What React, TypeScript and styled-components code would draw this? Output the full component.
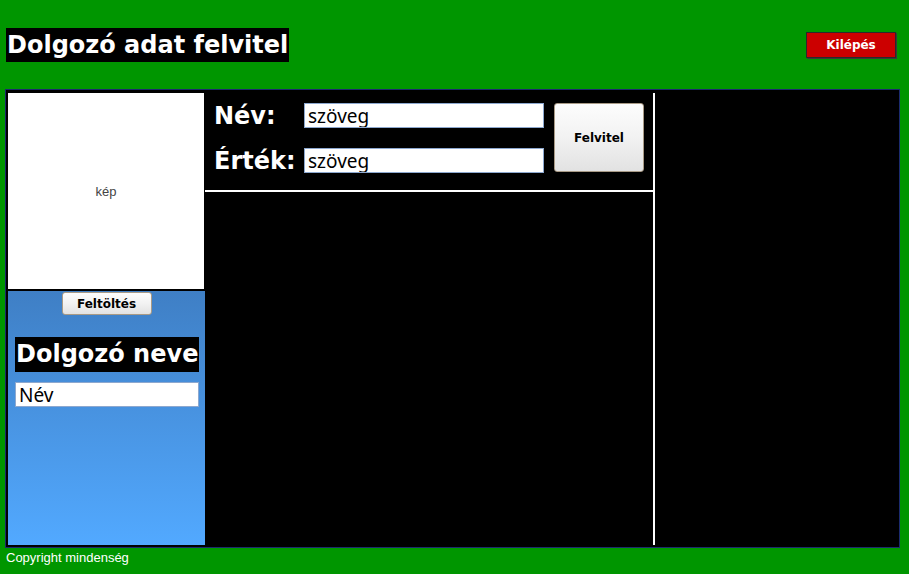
import React from "react";
import styled, { createGlobalStyle } from "styled-components";

const Global = createGlobalStyle`
  html, body { margin: 0; padding: 0; }
  body {
    background: #009600;
    font-family: "Liberation Sans", Arial, sans-serif;
    width: 909px;
    height: 574px;
    overflow: hidden;
  }
  * { box-sizing: border-box; }
`;

const Page = styled.div`
  display: flex;
  flex-direction: column;
  width: 909px;
  height: 574px;
`;

const Header = styled.header`
  height: 89px;
  display: flex;
  align-items: center;
  justify-content: space-between;
  padding: 0 13px 0 6px;
`;

const HeavyBox = styled.h1<{ $size?: number }>`
  margin: 0;
  display: inline-block;
  background: #000;
  color: #fff;
  font-family: "DejaVu Sans", Verdana, sans-serif;
  font-weight: bold;
  font-size: ${(p) => p.$size ?? 24}px;
  line-height: 34px;
  height: 34px;
  padding: 0 1px;
  white-space: nowrap;
`;

const ExitButton = styled.button`
  width: 90px;
  height: 26px;
  background: #cc0000;
  border: 1px solid #2a2a2a;
  box-shadow: 1px 1px 0 #3a3a3a;
  color: #fff;
  font-family: "DejaVu Sans", Verdana, sans-serif;
  font-weight: bold;
  font-size: 12px;
  padding: 0;
`;

const Main = styled.main`
  margin-left: 5px;
  width: 895px;
  height: 459px;
  border: 1px solid #1c2a6e;
  background: #000;
  padding: 3px 2px 2px 2px;
  display: grid;
  grid-template-columns: 197px 450px 1fr;
`;

const LeftCol = styled.div`
  display: flex;
  flex-direction: column;
  gap: 2px;
`;

const ImageBox = styled.div`
  width: 196px;
  height: 196px;
  background: #fff;
  color: #444;
  font-size: 13px;
  display: flex;
  align-items: center;
  justify-content: center;
`;

const BluePanel = styled.div`
  flex: 1;
  background: linear-gradient(to bottom, #3f7fc5, #52a9ff);
  display: flex;
  flex-direction: column;
  align-items: center;
  padding: 1px 0 0 0;
`;

const GreyButton = styled.button<{ $w: number; $h: number }>`
  width: ${(p) => p.$w}px;
  height: ${(p) => p.$h}px;
  background: linear-gradient(to bottom, #fdfdfd 0%, #f2f2f2 50%, #e2e2e2 100%);
  border: 1px solid #a89a86;
  border-radius: 3px;
  color: #000;
  font-family: "DejaVu Sans", Verdana, sans-serif;
  font-weight: bold;
  font-size: 12px;
  padding: 0;
  flex-shrink: 0;
`;

const NameSection = styled.div`
  align-self: stretch;
  padding: 22px 6px 0 7px;
  display: flex;
  flex-direction: column;
  gap: 10px;
`;

const NameHeading = styled(HeavyBox)`
  height: 35px;
  line-height: 35px;
  padding: 0 1px;
  display: block;
`;

const TextInput = styled.input<{ $w: number }>`
  width: ${(p) => p.$w}px;
  height: 25px;
  border: 1px solid #8da8cf;
  background: #fff;
  font-family: "Noto Sans", "Open Sans", sans-serif;
  font-size: 19px;
  color: #000;
  padding: 0 3px;
  outline: none;
`;

const MiddleCol = styled.div`
  border-right: 2px solid #fff;
  display: flex;
  flex-direction: column;
`;

const FormArea = styled.div`
  height: 99px;
  border-bottom: 2px solid #fff;
  padding: 10px 0 0 9px;
  display: flex;
  gap: 10px;
`;

const Fields = styled.div`
  display: flex;
  flex-direction: column;
  gap: 20px;
`;

const FieldRow = styled.label`
  display: flex;
  align-items: center;
  height: 25px;
`;

const FieldLabel = styled.span`
  width: 90px;
  color: #fff;
  font-family: "DejaVu Sans", Verdana, sans-serif;
  font-weight: bold;
  font-size: 24px;
  white-space: nowrap;
`;

const RightCol = styled.div``;

const Footer = styled.footer`
  padding: 2px 0 0 6px;
  color: #fff;
  font-size: 13px;
`;

export default function App() {
  return (
    <Page>
      <Global />
      <Header>
        <HeavyBox>Dolgozó adat felvitel</HeavyBox>
        <ExitButton>Kilépés</ExitButton>
      </Header>
      <Main>
        <LeftCol>
          <ImageBox>kép</ImageBox>
          <BluePanel>
            <GreyButton $w={90} $h={23}>Feltöltés</GreyButton>
            <NameSection>
              <NameHeading as="h2">Dolgozó neve</NameHeading>
              <TextInput $w={184} defaultValue="Név" />
            </NameSection>
          </BluePanel>
        </LeftCol>
        <MiddleCol>
          <FormArea>
            <Fields>
              <FieldRow>
                <FieldLabel>Név:</FieldLabel>
                <TextInput $w={240} defaultValue="szöveg" />
              </FieldRow>
              <FieldRow>
                <FieldLabel>Érték:</FieldLabel>
                <TextInput $w={240} defaultValue="szöveg" />
              </FieldRow>
            </Fields>
            <GreyButton $w={90} $h={69}>Felvitel</GreyButton>
          </FormArea>
        </MiddleCol>
        <RightCol />
      </Main>
      <Footer>Copyright mindenség</Footer>
    </Page>
  );
}
